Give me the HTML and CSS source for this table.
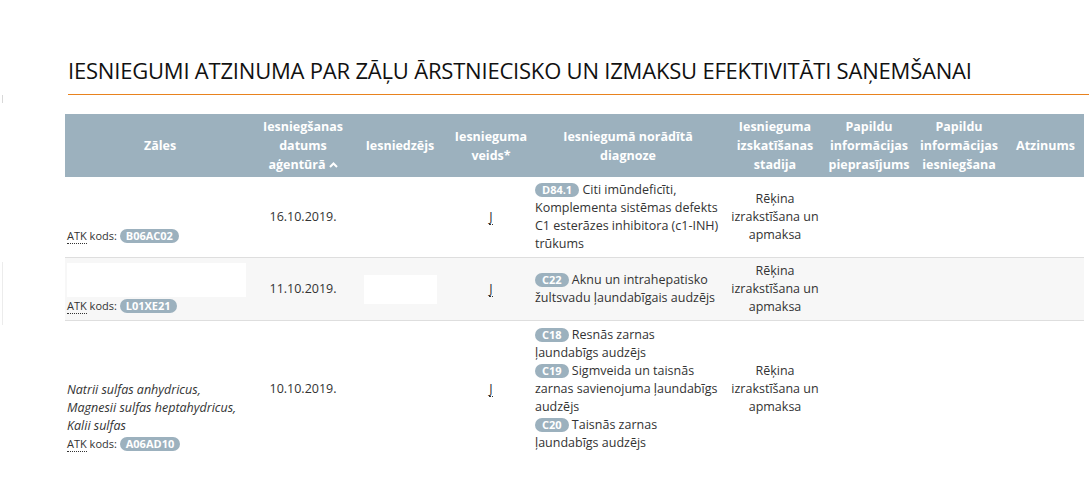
FILE: index.html
```html
<!DOCTYPE html>
<html lang="lv">
<head>
<meta charset="utf-8">
<title>Iesniegumi</title>
<link rel="stylesheet" href="styles.css">
</head>
<body>
<div class="edge-mark edge-mark-top"></div>
<div class="edge-mark edge-mark-row"></div>
<div class="page">
  <h1 class="title">IESNIEGUMI ATZINUMA PAR ZĀĻU ĀRSTNIECISKO UN IZMAKSU EFEKTIVITĀTI SAŅEMŠANAI</h1>
  <table class="grid">
    <colgroup>
      <col class="c1"><col class="c2"><col class="c3"><col class="c4"><col class="c5"><col class="c6"><col class="c7"><col class="c8"><col class="c9">
    </colgroup>
    <thead>
      <tr>
        <th>Zāles</th>
        <th>Iesniegšanas datums aģentūrā<svg class="sort" width="9" height="6" viewBox="0 0 9 6"><path d="M1 5 L4.5 1.5 L8 5" fill="none" stroke="#fff" stroke-width="2"/></svg></th>
        <th>Iesniedzējs</th>
        <th>Iesnieguma veids*</th>
        <th>Iesniegumā norādītā diagnoze</th>
        <th>Iesnieguma izskatīšanas stadija</th>
        <th>Papildu informācijas pieprasījums</th>
        <th>Papildu informācijas iesniegšana</th>
        <th>Atzinums</th>
      </tr>
    </thead>
    <tbody>
      <tr>
        <td class="drug"><div class="pic pic-a"></div><div class="atk"><abbr>ATK</abbr> kods: <span class="badge">B06AC02</span></div></td>
        <td class="mid">16.10.2019.</td>
        <td class="mid"></td>
        <td class="mid"><abbr class="type">J</abbr></td>
        <td class="diag"><span class="badge small">D84.1</span> Citi imūndeficīti, Komplementa sistēmas defekts C1 esterāzes inhibitora (c1-INH) trūkums</td>
        <td class="mid">Rēķina izrakstīšana un apmaksa</td>
        <td></td><td></td><td></td>
      </tr>
      <tr class="alt">
        <td class="drug"><div class="pic pic-b"></div><div class="atk"><abbr>ATK</abbr> kods: <span class="badge">L01XE21</span></div></td>
        <td class="mid">11.10.2019.</td>
        <td class="mid"><div class="logo"></div></td>
        <td class="mid"><abbr class="type">J</abbr></td>
        <td class="diag"><span class="badge small">C22</span> Aknu un intrahepatisko žultsvadu ļaundabīgais audzējs</td>
        <td class="mid">Rēķina izrakstīšana un apmaksa</td>
        <td></td><td></td><td></td>
      </tr>
      <tr>
        <td class="drug"><div class="pic pic-c"></div><div class="latin">Natrii sulfas anhydricus, Magnesii sulfas heptahydricus, Kalii sulfas</div><div class="atk"><abbr>ATK</abbr> kods: <span class="badge">A06AD10</span></div></td>
        <td class="mid">10.10.2019.</td>
        <td class="mid"></td>
        <td class="mid"><abbr class="type">J</abbr></td>
        <td class="diag"><div><span class="badge small">C18</span> Resnās zarnas ļaundabīgs audzējs</div><div><span class="badge small">C19</span> Sigmveida un taisnās zarnas savienojuma ļaundabīgs audzējs</div><div><span class="badge small">C20</span> Taisnās zarnas ļaundabīgs audzējs</div></td>
        <td class="mid">Rēķina izrakstīšana un apmaksa</td>
        <td></td><td></td><td></td>
      </tr>
    </tbody>
  </table>
</div>
</body>
</html>
```

FILE: styles.css
```css
html, body {
  margin: 0;
  padding: 0;
  background: #fff;
}
body {
  font-family: "Open Sans", "Noto Sans", sans-serif;
  color: #333;
  font-size: 12.5px;
  line-height: 18px;
  overflow: hidden;
}
.page {
  padding: 54px 0 0 65px;
}
.title {
  margin: 0 0 19px 3px;
  padding: 0 0 8px 0;
  font-size: 22px;
  line-height: 32px;
  font-weight: 400;
  letter-spacing: -0.2px;
  color: #111;
  border-bottom: 1px solid #e8821e;
}
.grid {
  border-collapse: collapse;
  table-layout: fixed;
  width: 1019px;
}
.c1 { width: 190px; }
.c2 { width: 96px; }
.c3 { width: 98px; }
.c4 { width: 84px; }
.c5 { width: 190px; }
.c6 { width: 104px; }
.c7 { width: 84px; }
.c8 { width: 96px; }
.c9 { width: 77px; }
.grid th {
  background: #9cb1be;
  color: #fff;
  font-weight: 700;
  font-size: 12.5px;
  line-height: 19px;
  padding: 3px 1px;
  text-align: center;
  vertical-align: middle;
}
.sort {
  margin-left: 3px;
  vertical-align: 1px;
}
.grid td {
  padding: 4px 2px;
  border-bottom: 1px solid #dedede;
  vertical-align: middle;
}
.grid tbody tr:last-child td {
  border-bottom: 0;
}
.grid tr.alt td {
  background: #f7f7f7;
}
.mid {
  text-align: center;
}
.drug {
  text-align: left;
  padding-left: 1px;
}
.diag {
  text-align: left;
}
.pic { height: 38px; }
.pic-b {
  height: 34px;
  width: 179px;
  background: #fff;
}
.pic-c { height: 56px; }
.logo {
  width: 73px;
  height: 29px;
  background: #fff;
  margin: 0 auto;
}
.latin {
  font-style: italic;
}
.atk {
  font-size: 11px;
  line-height: 18px;
}
abbr {
  text-decoration: none;
  border-bottom: 1px dotted #333;
}
.type {
  display: inline-block;
  line-height: 15px;
}
.badge {
  display: inline-block;
  background: #9cb1be;
  color: #fff;
  font-weight: 700;
  font-size: 11px;
  line-height: 14px;
  padding: 0 6px;
  border-radius: 7px;
}
.badge.small {
  padding: 0 7px;
}
.edge-mark {
  position: absolute;
  left: 2px;
  width: 1px;
}
.edge-mark-top {
  top: 95px;
  height: 8px;
  background: #d8d8d8;
}
.edge-mark-row {
  top: 262px;
  height: 63px;
  background: #ececec;
}
```
